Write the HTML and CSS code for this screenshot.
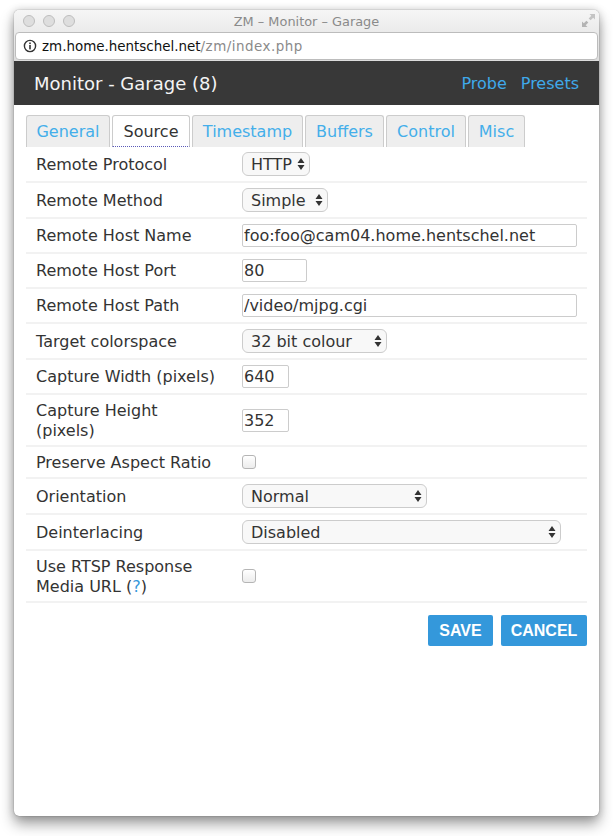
FILE: index.html
```html
<!DOCTYPE html>
<html lang="en">
<head>
<meta charset="utf-8">
<title>ZM - Monitor - Garage</title>
<link rel="stylesheet" href="styles.css">
</head>
<body>
<div class="window">
  <div class="chrome">
    <div class="titlebar">
      <div class="lights"><span class="light"></span><span class="light"></span><span class="light"></span></div>
      <div class="wintitle">ZM – Monitor – Garage</div>
      <svg class="resize" width="15" height="15" viewBox="0 0 15 15"><path d="M8.5 1H14V6.5L12.2 4.7 9.6 7.3 7.7 5.4 10.3 2.8Z" fill="#c4c4c4"/><path d="M6.5 14H1V8.5L2.8 10.3 5.4 7.7 7.3 9.6 4.7 12.2Z" fill="#b4b4b4"/></svg>
    </div>
    <div class="urlbar">
      <svg class="info" width="14" height="14" viewBox="0 0 14 14"><circle cx="7" cy="7" r="5.6" fill="none" stroke="#333" stroke-width="1.4"/><rect x="6.2" y="6" width="1.6" height="4.4" fill="#333"/><rect x="6.2" y="3.5" width="1.6" height="1.6" fill="#333"/></svg>
      <span class="host">zm.home.hentschel.net</span><span class="path">/zm/index.php</span>
    </div>
  </div>
  <header class="head">
    <h1 class="head-title">Monitor - Garage (8)</h1>
    <nav class="head-links"><a href="#">Probe</a><a href="#">Presets</a></nav>
  </header>
  <main class="content">
    <ul class="tabs">
      <li class="tab tab-general"><a href="#">General</a></li>
      <li class="tab tab-source active"><a href="#">Source</a></li>
      <li class="tab tab-timestamp"><a href="#">Timestamp</a></li>
      <li class="tab tab-buffers"><a href="#">Buffers</a></li>
      <li class="tab tab-control"><a href="#">Control</a></li>
      <li class="tab tab-misc"><a href="#">Misc</a></li>
    </ul>
    <form class="form">
      <div class="row"><label class="lbl">Remote Protocol</label><div class="field"><span class="sel w-http"><select><option>HTTP</option></select><svg class="arrows" width="8" height="14" viewBox="0 0 8 14"><path d="M4 1 7.5 6H.5ZM4 13 .5 8h7Z" fill="#333"/></svg></span></div></div>
      <div class="row"><label class="lbl">Remote Method</label><div class="field"><span class="sel w-simple"><select><option>Simple</option></select><svg class="arrows" width="8" height="14" viewBox="0 0 8 14"><path d="M4 1 7.5 6H.5ZM4 13 .5 8h7Z" fill="#333"/></svg></span></div></div>
      <div class="row"><label class="lbl lbl-input">Remote Host Name</label><div class="field"><input class="txt w-long" type="text" value="foo:foo@cam04.home.hentschel.net"></div></div>
      <div class="row"><label class="lbl lbl-input">Remote Host Port</label><div class="field"><input class="txt w-port" type="text" value="80"></div></div>
      <div class="row"><label class="lbl lbl-input">Remote Host Path</label><div class="field"><input class="txt w-long" type="text" value="/video/mjpg.cgi"></div></div>
      <div class="row"><label class="lbl">Target colorspace</label><div class="field"><span class="sel w-colour"><select><option>32 bit colour</option></select><svg class="arrows" width="8" height="14" viewBox="0 0 8 14"><path d="M4 1 7.5 6H.5ZM4 13 .5 8h7Z" fill="#333"/></svg></span></div></div>
      <div class="row"><label class="lbl lbl-input">Capture Width (pixels)</label><div class="field"><input class="txt w-dim" type="text" value="640"></div></div>
      <div class="row"><label class="lbl">Capture Height (pixels)</label><div class="field"><input class="txt w-dim" type="text" value="352"></div></div>
      <div class="row"><label class="lbl">Preserve Aspect Ratio</label><div class="field"><span class="check"></span></div></div>
      <div class="row"><label class="lbl">Orientation</label><div class="field"><span class="sel w-orient"><select><option>Normal</option></select><svg class="arrows" width="8" height="14" viewBox="0 0 8 14"><path d="M4 1 7.5 6H.5ZM4 13 .5 8h7Z" fill="#333"/></svg></span></div></div>
      <div class="row"><label class="lbl">Deinterlacing</label><div class="field"><span class="sel w-deint"><select><option>Disabled</option></select><svg class="arrows" width="8" height="14" viewBox="0 0 8 14"><path d="M4 1 7.5 6H.5ZM4 13 .5 8h7Z" fill="#333"/></svg></span></div></div>
      <div class="row"><label class="lbl">Use RTSP Response Media URL (<a href="#">?</a>)</label><div class="field"><span class="check"></span></div></div>
      <div class="actions"><button class="btn" type="button">SAVE</button><button class="btn" type="button">CANCEL</button></div>
    </form>
  </main>
</div>
</body>
</html>
```
FILE: styles.css
```css
* { box-sizing: border-box; }
html, body { margin: 0; padding: 0; background: #fff; }
body {
  height: 836px;
  padding: 10px 14px 20px;
  overflow: hidden;
  font-family: "DejaVu Sans", sans-serif;
  color: #333;
}
.window {
  width: 585px;
  height: 806px;
  display: flex;
  flex-direction: column;
  background: #fff;
  border-radius: 5px;
  box-shadow: 0 0 1px rgba(0,0,0,.55), 0 8px 14px rgba(0,0,0,.38), 0 0 8px rgba(0,0,0,.18);
  overflow: hidden;
}
.chrome {
  height: 51px;
  display: flex;
  flex-direction: column;
  background: linear-gradient(#f6f6f6, #dcdcdc);
}
.titlebar {
  height: 22px;
  display: flex;
  align-items: center;
  position: relative;
  justify-content: center;
}
.lights { position: absolute; left: 9px; top: 5px; display: flex; gap: 8px; }
.light {
  width: 12px; height: 12px; border-radius: 50%;
  background: #dedede; border: 1px solid #bdbdbd;
}
.wintitle { font-size: 12.9px; color: #8a8a8a; }
.resize { position: absolute; right: 3px; top: 3px; }
.urlbar {
  height: 28px;
  margin: 0 1px;
  display: flex;
  align-items: center;
  padding-left: 7px;
  background: #fff;
  border: 1px solid #bcbcbc;
  border-radius: 4px;
  font-size: 13.45px;
  white-space: nowrap;
}
.info { margin-right: 5px; }
.host { color: #111; }
.path { color: #8a8a8a; letter-spacing: .5px; }
.head {
  height: 44px;
  display: flex;
  align-items: center;
  justify-content: space-between;
  padding: 0 20px;
  background: #383838;
}
.head-title { margin: 0; font-size: 18px; font-weight: 400; color: #f4f4f4; }
.head-links { display: flex; gap: 14px; font-size: 16px; }
.head-links a { color: #3fa9ea; text-decoration: none; }
.content { padding: 10px 12px; }
.tabs { list-style: none; margin: 0; padding: 0; display: flex; gap: 2px; }
.tab {
  height: 32px;
  display: flex;
  align-items: center;
  justify-content: center;
  background: #eee;
  border: 1px solid #ccc;
  border-bottom: 0;
  border-radius: 3px 3px 0 0;
  font-size: 16px;
}
.tab a { color: #44aeea; text-decoration: none; }
.tab-general { width: 84px; }
.tab-source { width: 78px; }
.tab-timestamp { width: 111px; }
.tab-buffers { width: 79px; }
.tab-control { width: 80px; }
.tab-misc { width: 57px; }
.tab.active { background: #fff; border-bottom: 1px dotted #5a5ab8; }
.tab.active a { color: #333; }
.form { display: flex; flex-direction: column; }
.row {
  display: flex;
  align-items: center;
  padding: 5px 0;
  border-bottom: 2px solid #f2f2f2;
  min-height: 32px;
}
.lbl {
  width: 216px;
  padding: 1px 22px 0 10px;
  margin-bottom: -1px;
  font-size: 16px;
  line-height: 20px;
  color: #333;
  flex: none;
}
.lbl-input { padding-top: 0; margin-bottom: 0; }
.lbl a { color: #3498db; text-decoration: none; }
.field { flex: 1; display: flex; align-items: center; }
.sel { position: relative; display: block; height: 24px; }
.sel select {
  appearance: none;
  -webkit-appearance: none;
  width: 100%;
  height: 100%;
  padding: 0 0 0 8px;
  background: #f8f8f8;
  border: 1px solid #ccc;
  border-radius: 6px;
  font: 16px "DejaVu Sans", sans-serif;
  color: #333;
}
.arrows { position: absolute; right: 5px; top: 5px; pointer-events: none; }
.w-http { width: 68px; }
.w-simple { width: 86px; }
.w-colour { width: 145px; }
.w-orient { width: 185px; }
.w-deint { width: 319px; }
.txt {
  height: 23px;
  padding: 0 1px;
  border: 1px solid #ccc;
  border-radius: 2px;
  font: 16px "DejaVu Sans", sans-serif;
  color: #333;
  background: #fff;
}
.w-long { width: 335px; }
.w-port { width: 65px; }
.w-dim { width: 47px; }
.check {
  width: 14px; height: 14px;
  border: 1px solid #b5b5b5;
  border-radius: 3px;
  background: linear-gradient(#fff, #ececec);
}
.actions { display: flex; justify-content: flex-end; gap: 8px; margin-top: 12px; }
.btn {
  height: 31px;
  padding: 0;
  border: 0;
  border-radius: 2px;
  background: #3498db;
  color: #fff;
  font: 700 16px "Liberation Sans", sans-serif;
}
.btn:first-child { width: 65px; }
.btn:last-child { width: 86px; }
```
